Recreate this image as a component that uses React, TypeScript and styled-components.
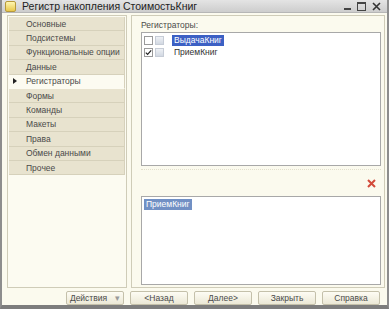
import React from 'react';
import styled, { createGlobalStyle } from 'styled-components';

const GlobalStyle = createGlobalStyle`
  html, body {
    margin: 0;
    padding: 0;
    background: #fbfaee;
  }
  body {
    font-family: "Liberation Sans", Arial, sans-serif;
    font-size: 9px;
    color: #222;
  }
`;

const Window = styled.div`
  width: 389px;
  height: 309px;
  box-sizing: border-box;
  display: flex;
  flex-direction: column;
  background: #fbfaee;
  border-left: 2px solid #8d8d8d;
  border-right: 2px solid #8d8d8d;
  border-bottom: 4px solid #7d7d7d;
`;

const TitleBar = styled.div`
  height: 18px;
  display: flex;
  align-items: center;
  padding: 0 6px 0 3px;
  background: linear-gradient(#e4e4e4, #cdcdcd);
  border-bottom: 1px solid #b6b6b6;
`;

const AppIcon = styled.div`
  width: 9px;
  height: 9px;
  margin-right: 6px;
  border: 1px solid #b89a3a;
  border-radius: 2px;
  background: linear-gradient(#fff6b0, #e8c84c);
`;

const Title = styled.div`
  flex: 1;
  font-size: 10.5px;
  color: #222;
`;

const Controls = styled.div`
  display: flex;
  align-items: center;
  gap: 6px;
`;

const Body = styled.div`
  flex: 1;
  display: flex;
  flex-direction: column;
  padding: 2px 2px 0 5px;
`;

const Main = styled.div`
  flex: 1;
  display: flex;
  gap: 4px;
`;

const Sidebar = styled.div`
  width: 120px;
  box-sizing: border-box;
  border: 1px solid #cfccb8;
  background: #fcfbf1;
  padding: 1px;
`;

const Tab = styled.div<{ $active?: boolean }>`
  height: 14.4px;
  box-sizing: border-box;
  display: flex;
  align-items: center;
  padding-left: ${(p) => (p.$active ? '4px' : '17px')};
  font-size: 8.5px;
  color: #4a4a4a;
  background: ${(p) => (p.$active ? '#fcfbf1' : '#e8e3cf')};
  border-bottom: 1px solid ${(p) => (p.$active ? '#fcfbf1' : '#d6d1bb')};
  border-right: 1px solid #d6d1bb;
`;

const Arrow = styled.span`
  width: 0;
  height: 0;
  margin-right: 9px;
  border-top: 3px solid transparent;
  border-bottom: 3px solid transparent;
  border-left: 4px solid #222;
`;

const Panel = styled.div`
  flex: 1;
  box-sizing: border-box;
  border: 1px solid #cfccb8;
  padding: 4px 3px 2px 9px;
  display: flex;
  flex-direction: column;
`;

const Label = styled.div`
  font-size: 8.5px;
  color: #4a4a4a;
  height: 10px;
  line-height: 10px;
  margin-bottom: 2px;
`;

const ListBox = styled.div<{ $height: number }>`
  height: ${(p) => p.$height}px;
  box-sizing: border-box;
  background: #fff;
  border: 1px solid #a8a8a8;
  padding: 2px 2px;
`;

const Row = styled.div`
  height: 11px;
  display: flex;
  align-items: center;
  gap: 2px;
  margin-bottom: 1px;
`;

const Check = styled.div`
  width: 7px;
  height: 7px;
  border: 1px solid #9a9a9a;
  background: #fff;
  display: flex;
  align-items: center;
  justify-content: center;
`;

const PicIcon = styled.div`
  width: 7px;
  height: 7px;
  margin-right: 6px;
  border: 1px solid #c6ccd6;
  background: linear-gradient(#eef1f5, #d2d8e2);
`;

const ItemText = styled.span<{ $selected?: boolean; $tone?: string }>`
  font-size: 8.5px;
  padding: 1px 2px;
  line-height: 9px;
  color: ${(p) => (p.$selected ? '#fff' : '#333')};
  background: ${(p) => (p.$selected ? p.$tone || '#3c60c4' : 'transparent')};
`;

const DeleteBar = styled.div`
  height: 26px;
  display: flex;
  justify-content: flex-end;
  align-items: center;
  padding-right: 5px;
  border-top: 1px dotted #e2dfcc;
  margin-top: 3px;
`;

const Footer = styled.div`
  height: 19px;
  display: flex;
  align-items: center;
  justify-content: flex-end;
  gap: 6px;
  padding-right: 5px;
`;

const Button = styled.div`
  width: 58px;
  height: 14px;
  box-sizing: border-box;
  border: 1px solid #c4c0aa;
  border-radius: 2px;
  background: linear-gradient(#fdfcf4, #ebe8d6);
  display: flex;
  align-items: center;
  justify-content: center;
  font-size: 8.5px;
  color: #4a4a4a;
`;

const Caret = styled.span`
  color: #999;
  margin-left: 8px;
`;

const tabs = [
  'Основные',
  'Подсистемы',
  'Функциональные опции',
  'Данные',
  'Регистраторы',
  'Формы',
  'Команды',
  'Макеты',
  'Права',
  'Обмен данными',
  'Прочее',
];

const CheckMark = () => (
  <svg width="7" height="7" viewBox="0 0 7 7">
    <path d="M0.8 3.6 L2.6 5.4 L6.2 1.4" fill="none" stroke="#222" strokeWidth="1.2" />
  </svg>
);

const App: React.FC = () => (
  <>
    <GlobalStyle />
    <Window>
      <TitleBar>
        <AppIcon />
        <Title>Регистр накопления СтоимостьКниг</Title>
        <Controls>
          <svg width="7" height="8" viewBox="0 0 7 8">
            <rect x="0" y="6" width="7" height="2" fill="#444" />
          </svg>
          <svg width="9" height="9" viewBox="0 0 9 9">
            <rect x="0.5" y="0.5" width="8" height="8" fill="none" stroke="#444" />
            <rect x="0.5" y="0.5" width="8" height="1.5" fill="#444" />
          </svg>
          <svg width="9" height="9" viewBox="0 0 9 9">
            <path d="M1 1 L8 8 M8 1 L1 8" stroke="#333" strokeWidth="1.6" />
          </svg>
        </Controls>
      </TitleBar>
      <Body>
        <Main>
          <Sidebar>
            {tabs.map((t) => (
              <Tab key={t} $active={t === 'Регистраторы'}>
                {t === 'Регистраторы' && <Arrow />}
                {t}
              </Tab>
            ))}
          </Sidebar>
          <Panel>
            <Label>Регистраторы:</Label>
            <ListBox $height={134}>
              <Row>
                <Check />
                <PicIcon />
                <ItemText $selected>ВыдачаКниг</ItemText>
              </Row>
              <Row>
                <Check>
                  <CheckMark />
                </Check>
                <PicIcon />
                <ItemText>ПриемКниг</ItemText>
              </Row>
            </ListBox>
            <DeleteBar>
              <svg width="9" height="9" viewBox="0 0 9 9">
                <path d="M1 1 L8 8 M8 1 L1 8" stroke="#d24a3a" strokeWidth="2" />
              </svg>
            </DeleteBar>
            <ListBox $height={89}>
              <Row>
                <ItemText $selected $tone="#7190c4">
                  ПриемКниг
                </ItemText>
              </Row>
            </ListBox>
          </Panel>
        </Main>
        <Footer>
          <Button>
            Действия<Caret>▾</Caret>
          </Button>
          <Button>&lt;Назад</Button>
          <Button>Далее&gt;</Button>
          <Button>Закрыть</Button>
          <Button>Справка</Button>
        </Footer>
      </Body>
    </Window>
  </>
);

export default App;
